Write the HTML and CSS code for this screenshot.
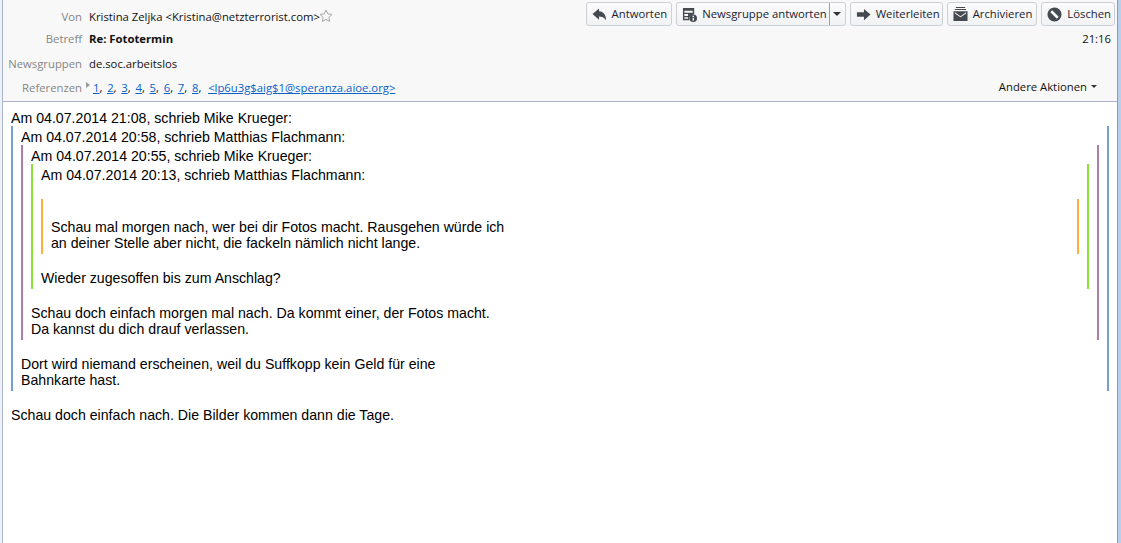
FILE: index.html
```html
<!DOCTYPE html>
<html lang="de">
<head>
<meta charset="utf-8">
<title>Re: Fototermin</title>
<link rel="stylesheet" href="styles.css">
</head>
<body>
<div class="window">
  <header class="head">
    <div class="toolbar">
      <button class="btn btn-wide"><svg class="ico" viewBox="0 0 16 16"><path d="M7.500 1.500 0.500 7.500l7 6V10c3 0 5.500 .8 7.500 4 0-5.500-2.500-9-7.500-9.500z"/></svg>Antworten</button>
      <div class="btn split">
        <span class="split-main"><svg class="ico" viewBox="0 0 16 16"><path fill-rule="evenodd" d="M1 1h12v7a4.500 4.500 0 0 0-5 6H1zM2.500 4v2h9V4zm0 3.500v2h4v-2zm0 3.500v1.500h4V11z"/><circle cx="12" cy="12" r="4"/><rect x="11.300" y="11.500" width="1.500" height="3" fill="#fff"/><rect x="11.300" y="9.300" width="1.500" height="1.400" fill="#fff"/></svg>Newsgruppe antworten</span>
        <span class="split-arrow"><i class="caret"></i></span>
      </div>
      <button class="btn btn-narrow"><svg class="ico" viewBox="0 0 16 16"><path d="M8.500 2 15.500 8l-7 6v-3.500H1v-5h7.500z"/></svg>Weiterleiten</button>
      <button class="btn btn-wide"><svg class="ico" viewBox="0 0 16 16"><path fill-rule="evenodd" d="M3 0h10v1H3zM2 2h12v1.200H2zM.5 4.500h15V15H.5zM2 6.800 8 11l6-4.200V5.700L8 9.800 2 5.700z"/></svg>Archivieren</button>
      <button class="btn"><svg class="ico" viewBox="0 0 16 16"><path fill-rule="evenodd" d="M8 .5a7.500 7.500 0 1 0 0 15A7.500 7.500 0 0 0 8 .5zM3.500 5.500 5.500 3.500l7 7-2 2z"/></svg>Löschen</button>
    </div>
    <div class="row row-from">
      <span class="label">Von</span>
      <span class="value">Kristina Zeljka &lt;Kristina@netzterrorist.com&gt;</span>
      <svg class="star" viewBox="0 0 14 14"><path d="M7 1l1.800 3.900 4.200.5-3.100 2.900.8 4.200L7 10.400l-3.700 2.100.8-4.200L1 5.400l4.200-.5z"/></svg>
    </div>
    <div class="row row-subject">
      <span class="label">Betreff</span>
      <strong class="value">Re: Fototermin</strong>
      <span class="time">21:16</span>
    </div>
    <div class="row row-groups">
      <span class="label">Newsgruppen</span>
      <span class="value">de.soc.arbeitslos</span>
    </div>
    <div class="row row-refs">
      <span class="label">Referenzen</span>
      <i class="twisty"></i>
      <span class="refs"><a href="#">1</a>, <a href="#">2</a>, <a href="#">3</a>, <a href="#">4</a>, <a href="#">5</a>, <a href="#">6</a>, <a href="#">7</a>, <a href="#">8</a>, <a class="msgid" href="#">&lt;lp6u3g$aig$1@speranza.aioe.org&gt;</a></span>
      <span class="more">Andere Aktionen<i class="caret small"></i></span>
    </div>
  </header>
  <main class="body">
    <div>Am 04.07.2014 21:08, schrieb Mike Krueger:</div>
    <blockquote class="q q1">
      <div>Am 04.07.2014 20:58, schrieb Matthias Flachmann:</div>
      <blockquote class="q q2">
        <div>Am 04.07.2014 20:55, schrieb Mike Krueger:</div>
        <blockquote class="q q3">
          <div>Am 04.07.2014 20:13, schrieb Matthias Flachmann:</div>
          <br>
          <blockquote class="q q4">
            <br>
            <div>Schau mal morgen nach, wer bei dir Fotos macht. Rausgehen würde ich<br>an deiner Stelle aber nicht, die fackeln nämlich nicht lange.</div>
          </blockquote>
          <br>
          <div>Wieder zugesoffen bis zum Anschlag?</div>
        </blockquote>
        <br>
        <div>Schau doch einfach morgen mal nach. Da kommt einer, der Fotos macht.<br>Da kannst du dich drauf verlassen.</div>
      </blockquote>
      <br>
      <div>Dort wird niemand erscheinen, weil du Suffkopp kein Geld für eine<br>Bahnkarte hast.</div>
    </blockquote>
    <br>
    <div>Schau doch einfach nach. Die Bilder kommen dann die Tage.</div>
  </main>
</div>
</body>
</html>
```
FILE: styles.css
```css
html, body { margin: 0; padding: 0; height: 100%; overflow: hidden; }
html { background: linear-gradient(to right, #eef1f7 50%, #b9d0ec 50%); }
.window {
  box-sizing: border-box;
  width: 1116px;
  height: 543px;
  margin-left: 2px;
  border-left: 1px solid #a9b4c8;
  border-right: 1px solid #8d9ab3;
  background: #fff;
  display: flex;
  flex-direction: column;
}
.head {
  position: relative;
  height: 102px;
  box-sizing: border-box;
  flex: none;
  background: #f8f8f8;
  border-bottom: 1px solid #aab2c6;
  font: 11.3px/16px "Open Sans", "Noto Sans", sans-serif;
  color: #111;
}
.toolbar {
  position: absolute;
  top: 2px;
  right: 2px;
  display: flex;
  gap: 4px;
}
.btn {
  display: flex;
  align-items: center;
  box-sizing: border-box;
  height: 24px;
  padding: 0 3px 0 5px;
  margin: 0;
  border: 1px solid #ccd0d6;
  border-radius: 3px;
  background: linear-gradient(#fbfbfc, #f1f2f4);
  font: inherit;
  color: #1a2230;
  white-space: nowrap;
}
.btn-wide { padding-right: 4px; }
.btn-narrow { padding-right: 2px; }
.ico { width: 15px; height: 15px; margin-right: 5px; fill: #454a50; flex: none; }
.split { padding: 0; }
.split-main { display: flex; align-items: center; padding: 0 2px 0 5px; height: 100%; border-right: 1px solid #9aa0a8; }
.split-arrow { width: 15px; display: flex; align-items: center; justify-content: center; }
.caret { display: block; width: 0; height: 0; border: 4px solid transparent; border-top-color: #333; border-bottom: 0; }
.caret.small { display: inline-block; border-width: 3px; border-bottom: 0; margin-left: 4px; vertical-align: 3px; }
.row { display: flex; align-items: center; height: 16px; position: absolute; left: 0; right: 0; }
.row-from { top: 9px; }
.row-subject { top: 31px; }
.row-groups { top: 56px; }
.row-refs { top: 80px; }
.label { width: 79px; text-align: right; color: #858585; flex: none; margin-right: 7px; }
.value { white-space: nowrap; }
.star { width: 14px; height: 14px; fill: none; stroke: #a8a8a8; flex: none; margin: -2px 0 0 -1px; }
.time { position: absolute; right: 6px; }
.twisty { width: 0; height: 0; margin: -6px 0 0 -3px; border-left: 4px solid #999; border-top: 3px solid transparent; border-bottom: 3px solid transparent; }
.refs { margin-left: 3px; white-space: nowrap; word-spacing: 1.8px; }
.refs a { color: #0a62c9; }
.refs .msgid { word-spacing: 0; margin-left: 2px; }
.more { position: absolute; top: -1px; right: 20px; white-space: nowrap; }
.body {
  flex: 1;
  padding: 8px 8px 0 8px;
  font: 14.16px/16px "Liberation Sans", Arial, sans-serif;
  color: #000;
  white-space: nowrap;
}
.q {
  margin: 0;
  padding: 3px 8px;
  border-left: 2px solid;
  border-right: 2px solid;
}
.q1 { border-color: #729fcf; }
.q2 { border-color: #ad7fa8; }
.q3 { border-color: #8ae234; }
.q4 { border-color: #fcaf3e; padding-top: 4px; }
```
